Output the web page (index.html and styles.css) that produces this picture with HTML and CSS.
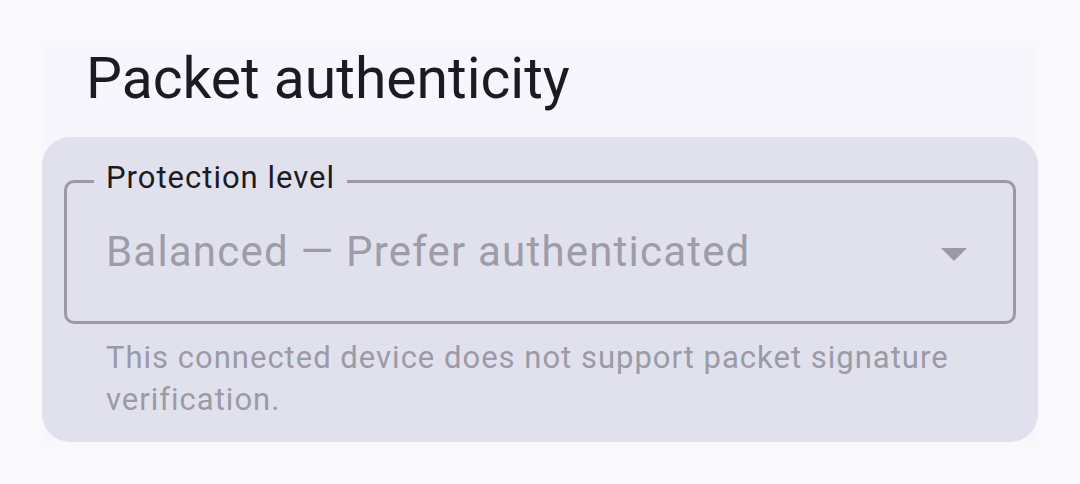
FILE: index.html
```html
<!DOCTYPE html>
<html lang="en">
<head>
  <meta charset="UTF-8">
  <title>Packet authenticity</title>
  <link rel="stylesheet" href="styles.css">
</head>
<body>
  <section class="settings-section">
    <h2 class="section-title">Packet authenticity</h2>

    <div class="setting-card">
      <fieldset class="select-field" disabled>
        <legend>Protection level</legend>
        <div class="select-value">
          <span>Balanced — Prefer authenticated</span>
          <span class="dropdown-arrow"></span>
        </div>
      </fieldset>
      <p class="helper-text">This connected device does not support packet signature verification.</p>
    </div>
  </section>
</body>
</html>
```

FILE: styles.css
```css
body { margin: 0; background: #f9f9fb; font-family: Roboto, "Noto Sans", sans-serif; }

.settings-section { margin: 42px 42px 0; background: #f7f6fd; }
.section-title { margin: 0; padding: 4px 44px 24px; font-size: 57px; font-weight: 400; line-height: 1.172; color: #1b1b21; }

.setting-card { background: #e1e1ee; border-radius: 28px; padding: 23px 22px 21px; }

.select-field { margin: 0; padding: 0 46px 0 39px; border: 3px solid #9a99a5; border-radius: 10px; min-width: 0; }
.select-field legend { margin-left: -12px; padding: 0 12px 7px; font-size: 31px; line-height: 1.172; color: #1b1b21; letter-spacing: 1px; }

.select-value { display: flex; align-items: center; justify-content: space-between; height: 118px; padding-bottom: 21px; box-sizing: border-box; font-size: 42px; color: #9d9ca8; letter-spacing: 1.2px; }
.dropdown-arrow { width: 0; height: 0; margin-top: 6px; border-left: 13px solid transparent; border-right: 13px solid transparent; border-top: 13px solid #9a99a5; }

.helper-text { margin: 13px 0 0; padding: 0 42px; font-size: 31px; line-height: 42px; color: #9b9aa6; letter-spacing: 1px; }
```
